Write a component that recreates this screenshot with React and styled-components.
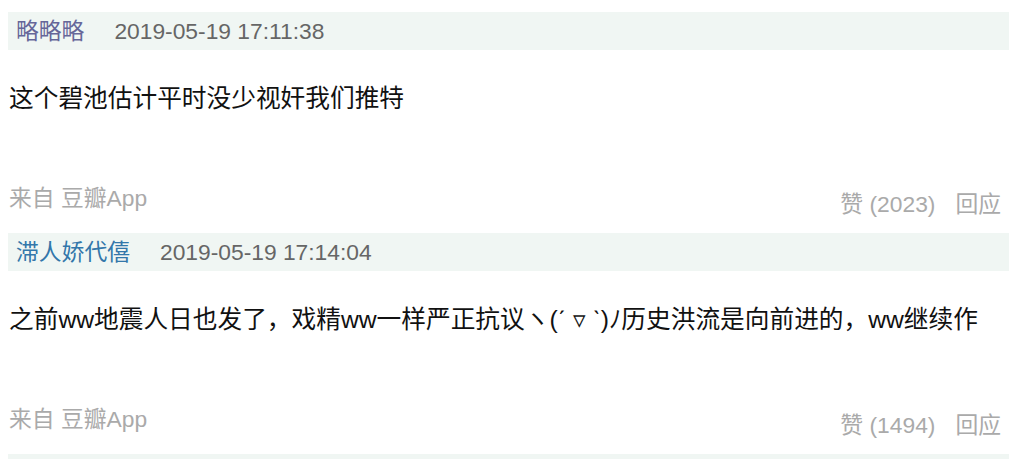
import styled, { createGlobalStyle } from "styled-components";

const GlobalStyle = createGlobalStyle`
  body {
    margin: 0;
    background: #fff;
    overflow: hidden;
    font-family: "Liberation Sans", Arial, "Noto Sans CJK SC", sans-serif;
  }
`;

const comments = [
  {
    name: "略略略",
    visited: true,
    time: "2019-05-19 17:11:38",
    text: "这个碧池估计平时没少视奸我们推特",
    votes: 2023,
  },
  {
    name: "滞人娇代僖",
    visited: false,
    time: "2019-05-19 17:14:04",
    text: "之前ww地震人日也发了，戏精ww一样严正抗议ヽ(ˊ ▿ ˋ)ﾉ历史洪流是向前进的，ww继续作",
    votes: 1494,
  },
];

export default function App() {
  return (
    <>
      <GlobalStyle />
      <List>
        {comments.map((c) => (
          <Comment key={c.time}>
            <Header>
              <Author visited={c.visited}>{c.name}</Author>
              <Time>{c.time}</Time>
            </Header>
            <Body>{c.text}</Body>
            <Footer>
              <Source>来自 豆瓣App</Source>
              <Actions>
                <span>赞 ({c.votes})</span>
                <span>回应</span>
              </Actions>
            </Footer>
          </Comment>
        ))}
        <Header />
      </List>
    </>
  );
}

const List = styled.div`
  width: 1001px;
  height: 459px;
  margin-left: 8px;
  padding-top: 12px;
  box-sizing: border-box;
  overflow: hidden;
`;

const Comment = styled.div`
  display: flex;
  flex-direction: column;
`;

const Header = styled.div`
  display: flex;
  align-items: center;
  gap: 30px;
  height: 38px;
  padding-left: 8px;
  background: #f0f6f3;
  font-size: 22.8px;
  line-height: 38px;
`;

const Author = styled.span`
  color: ${(p) => (p.visited ? "#666699" : "#3377aa")};
`;

const Time = styled.span`
  color: #666;
`;

const Body = styled.p`
  margin: 0;
  padding: 34px 0 0 1px;
  font-size: 24.7px;
  line-height: 30px;
  color: #111;
`;

const Footer = styled.div`
  display: flex;
  justify-content: space-between;
  align-items: flex-start;
  padding: 70px 8px 15px 1px;
  font-size: 22.8px;
  line-height: 28px;
  color: #aaa;
`;

const Source = styled.span``;

const Actions = styled.div`
  display: flex;
  gap: 20px;
  margin-top: 6px;
`;
